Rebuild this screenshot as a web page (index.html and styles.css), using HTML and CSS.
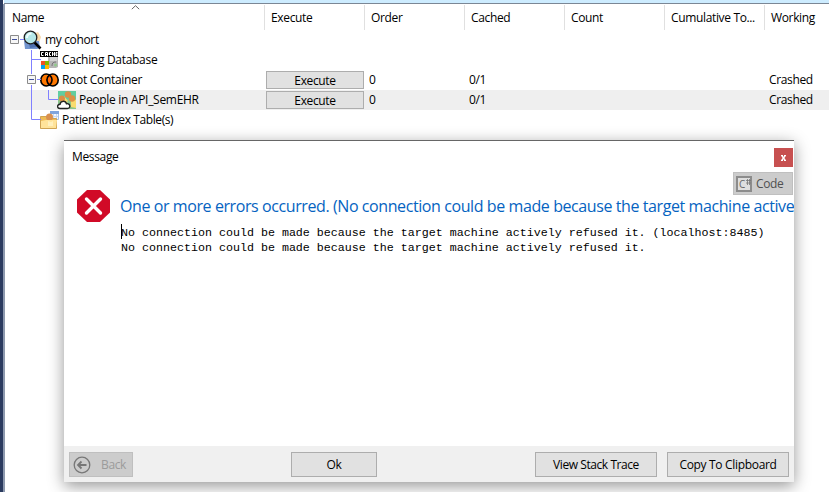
FILE: index.html
```html
<!DOCTYPE html>
<html lang="en">
<head>
<meta charset="utf-8">
<title>Cohort builder</title>
<link rel="stylesheet" href="styles.css">
</head>
<body>
<div class="app">
  <div class="topbar"></div>
  <main class="tree">
    <svg class="sort" width="9" height="5" viewBox="0 0 9 5"><path d="M.8 4.2 4.5.7l3.7 3.5" fill="none" stroke="#666"/></svg>
    <div class="row header">
      <div>Name</div><div>Execute</div><div>Order</div><div>Cached</div><div>Count</div><div><span>Cumulative To...</span></div><div>Working</div>
    </div>
    <div class="row"><div class="node root">
      <svg class="icon" width="19" height="20" viewBox="0 0 19 20"><path d="M10 4l5-2 3 5-2 6-4-4z" fill="#f8d8a8"/><path d="M1 11h15l1 7-3 1H2z" fill="#7194cd"/><path d="M6 14l5 0 3 3-7 1z" fill="#4d6fae"/><path d="M11.500 12.500l6 6" stroke="#000" stroke-width="2.600"/><circle cx="7.500" cy="7.500" r="6.300" fill="#b5e8e8" stroke="#222" stroke-width="1.300"/><path d="M4 8c0-3 2-4.500 4.500-4.500" fill="none" stroke="#effcfb" stroke-width="2"/></svg>
      <span>my cohort</span></div></div>
    <div class="row"><div class="node child">
      <svg class="icon" width="19" height="19" viewBox="0 0 19 19"><path d="M8 5h10v11l-2 1H8z" fill="#b6b6b6"/><path d="M10 7h7M10 9h7" stroke="#eee"/><path d="M12 15c0-3 1-4 4-4" stroke="#777" fill="none"/><circle cx="15.500" cy="14" r="1.500" fill="#91c98c"/><path d="M0 0h18v6H0z" fill="#000"/><path d="M3.500 1.500h-2v3h2M5.500 5V1.500h2V5M5.500 3.500h2M11 1.500H9.500v3H11M12.500 1v4M14.500 1v4M12.500 3h2M17.500 1.500h-1.500v3h1.500M16 3h1.500" stroke="#fff" fill="none"/><path d="M1 10h4v4H1z" fill="#f25022"/><path d="M5 10h4v4H5z" fill="#7fba00"/><path d="M1 14h4v4H1z" fill="#00a4ef"/><path d="M5 14h4v4H5z" fill="#ffb900"/></svg>
      <span class="looser">Caching Database</span></div></div>
    <div class="row"><div class="node child">
      <svg class="icon" width="19" height="16" viewBox="0 0 19 16"><ellipse cx="6.200" cy="8" rx="5.400" ry="6" fill="#ff7800" stroke="#000" stroke-width="1.600"/><ellipse cx="12.800" cy="8" rx="5.400" ry="6" fill="#ff7800" stroke="#000" stroke-width="1.600"/><path d="M9.500 2.800c-3.400 3-3.400 7.400 0 10.400 3.400-3 3.400-7.400 0-10.400z" fill="#ff6500" stroke="#000" stroke-width="1.600"/></svg>
      <span class="looser">Root Container</span></div>
      <div><button class="execute">Execute</button></div><div>0</div><div>0/1</div><div></div><div></div><div>Crashed</div></div>
    <div class="row selected"><div class="node grandchild">
      <svg class="icon" width="19" height="19" viewBox="0 0 19 19"><path d="M1 0h18v18H1z" fill="#61cda1"/><path d="M1 8h18v10H1z" fill="#8bc68c"/><path d="M7 5l4 5-4 4zM14 7l5 2v8l-5-1z" fill="#f8dc70"/><circle cx="11" cy="3.500" r="3.200" fill="#dc8f47"/><circle cx="5" cy="7.500" r="3" fill="#dc8f47"/><circle cx="15" cy="7.500" r="3.200" fill="#dc8f47"/><path d="M3 17.500c-3.300 0-3.200-4 0-4.200.4-3.700 5.600-4 6.500-.6 4-.7 4.500 4.800.8 4.800z" fill="#fff" stroke="#222" stroke-width="1.400"/></svg>
      <span class="looser">People in API_SemEHR</span></div>
      <div><button class="execute">Execute</button></div><div>0</div><div>0/1</div><div></div><div></div><div>Crashed</div></div>
    <div class="row"><div class="node child">
      <svg class="icon" width="19" height="20" viewBox="0 0 19 20"><path d="M10.500 1.500h8v8h-8z" fill="#f2f7ff" stroke="#a5c0e6"/><path d="M10 1h9v3h-9z" fill="#7fa4dd"/><path d="M13.500 4v5M16.500 4v5M11 6.500h7" stroke="#c6d8f0"/><path d="M.5 6.500h6l1 2h9v10H.5z" fill="#edbb57" stroke="#cfa353"/><circle cx="9.500" cy="7" r="3.500" fill="#d9904f"/><path d="M1 11l5-1h11l-1 8H1z" fill="#ffe39a"/><path d="M8 11l3 1 2-1v5H8z" fill="#fff0bd"/></svg>
      <span class="tighter">Patient Index Table(s)</span></div></div>
    <svg class="lines" width="62" height="100" viewBox="0 0 62 100" fill="none"><path d="M15 9.500h4M26.500 20v24M26.500 29.500H36M26.500 55v34.500H36M32 49.500h4M43.500 60v9.500H53" stroke="#8080ff"/><g stroke="#8a8a8a" fill="#f6f6f6"><path d="M5.500 5.500h8v8h-8zM22.500 45.500h8v8h-8z"/></g><path d="M7 9.500h5M24 49.500h5" stroke="#404f9b"/></svg>
  </main>
  <section class="dialog">
    <header class="titlebar"><span>Message</span><button class="close"><svg width="5" height="6" viewBox="0 0 5 6"><path d="M.7 .5l3.600 5M4.300.5.7 5.500" stroke="#fff" stroke-width="1.300"/><path d="M0 .5h2M3 .5h2M0 5.500h2M3 5.500h2" stroke="#fff"/></svg></button></header>
    <div class="tools"><button class="code"><span class="cs">C<svg width="5" height="6" viewBox="0 0 5 6"><path d="M1.500 0v6M3.500 0v6M0 1.500h5M0 4h5" stroke="#777" stroke-width=".8"/></svg></span><span>Code</span></button></div>
    <div class="body">
      <svg class="error" width="33" height="32" viewBox="0 0 33 32"><path d="M10 0h13l10 9.500v13L23 32H10L0 22.500v-13z" fill="#d10a27"/><path d="M9.500 9l14 14M23.500 9l-14 14" stroke="#fff" stroke-width="3.400" stroke-linecap="round"/></svg>
      <div class="copy"><h1>One or more errors occurred. (No connection could be made because the target machine active</h1>
      <pre>No connection could be made because the target machine actively refused it. (localhost:8485)
No connection could be made because the target machine actively refused it.</pre></div>
    </div>
    <footer>
      <button class="back"><svg width="18" height="18" viewBox="0 0 18 18" fill="none" stroke="#777"><circle cx="9" cy="9" r="7.800" stroke-width="1.300"/><path d="M13.500 9H6M8.500 5.500 5 9l3.500 3.500" stroke-width="1.800"/></svg><span>Back</span></button>
      <button class="ok">Ok</button>
      <button class="trace">View Stack Trace</button>
      <button class="clip">Copy To Clipboard</button>
    </footer>
  </section>
</div>
</body>
</html>
```
FILE: styles.css
```css
* { box-sizing: border-box; }
body { margin: 0; background: #fff; color: #000; font: 12px/20px "Open Sans", "Noto Sans", sans-serif; letter-spacing: -.35px; }
button { font: inherit; letter-spacing: inherit; color: inherit; padding: 0; margin: 0; border: 1px solid #adadad; border-radius: 0; background: #e1e1e1; display: flex; align-items: center; justify-content: center; }
svg { display: block; flex: none; }
span { white-space: nowrap; }
.looser { letter-spacing: -.3px; }
.tighter { letter-spacing: -.4px; }
.app { position: relative; width: 829px; height: 492px; overflow: hidden; border-left: 3px solid #2b3b5f; }
.topbar { height: 4px; margin-left: 1px; background: #cdecff; border-bottom: 1px solid #7b8795; }
.tree { position: relative; height: 488px; border-left: 2px solid #8d99ae; }
.sort { position: absolute; left: 126px; top: 1px; }
.row { display: grid; grid-template-columns: 260px repeat(5, 100px) 64px; height: 20px; }
.row > div { padding-left: 4px; }
.header { height: 26px; line-height: 26px; }
.row.header > div { height: 25px; margin-top: 1px; padding-left: 6px; border-right: 1px solid #e0e0e0; }
.row.header > div:first-child { padding-left: 7px; }
.row.header > div:last-child { border: 0; }
.selected { background: #efefef; }
.row > .node { display: flex; align-items: center; gap: 3px; }
.row > .root { padding-left: 18px; }
.row > .child { padding-left: 35px; }
.row > .grandchild { padding-left: 52px; }
.row > div:has(.execute) { padding: 1px 0 0 1px; }
.execute { width: 98px; height: 18px; line-height: 17px; }
.lines { position: absolute; left: 0; top: 26px; }
.dialog { position: absolute; left: 61px; top: 140px; width: 730px; height: 342px; display: flex; flex-direction: column; background: #fff; border-top: 1px solid #666; box-shadow: 0 4px 15px rgba(0,0,0,.42); }
.titlebar { height: 31px; display: flex; justify-content: space-between; padding: 7px 1px 0 8px; line-height: 17px; }
.close { width: 19px; height: 19px; background: #c75050; border: 0; }
.tools { height: 23px; display: flex; justify-content: flex-end; padding-right: 1px; }
.code { width: 60px; height: 23px; background: #ccc; border-color: #bfbfbf; color: #505050; justify-content: flex-start; padding-left: 2px; gap: 4px; }
.cs { display: flex; gap: 1px; width: 16px; height: 16px; padding: 1px 0 0 1px; border: 2px solid #8c8c8c; background: #dedede; font-size: 10px; line-height: 10px; color: #666; letter-spacing: -.5px; }
.body { flex: 1; display: flex; margin-top: -5px; padding-left: 13px; overflow: hidden; }
.copy { margin-left: 10px; width: 674px; }
h1 { margin: 0; font-size: 16px; line-height: 32px; height: 32px; font-weight: 400; color: #0563c1; letter-spacing: -.41px; white-space: nowrap; }
pre { margin: 4px 0 0; padding-left: 1px; font: 11.667px/15px "Liberation Mono", monospace; letter-spacing: 0; position: relative; }
pre::before { content: ""; position: absolute; left: 1px; top: -2px; width: 1px; height: 15px; background: #000; }
footer { height: 36px; flex: none; background: #f0f0f0; display: flex; padding: 6px 5px; }
footer button { height: 25px; }
.back { width: 64px; background: #ccc; border-color: #bfbfbf; color: #9b9b9b; justify-content: flex-start; padding-left: 3px; gap: 10px; }
.ok { width: 86px; margin-left: 158px; }
.trace { width: 122px; margin-left: 158px; letter-spacing: -.43px; }
.clip { width: 122px; margin-left: 10px; letter-spacing: -.32px; }
```
